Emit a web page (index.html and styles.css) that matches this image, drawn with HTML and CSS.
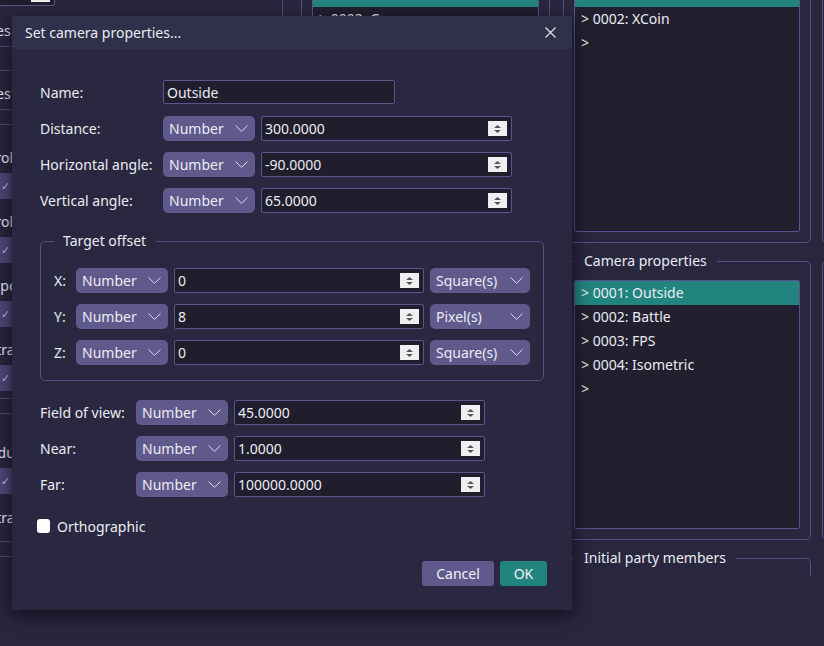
FILE: index.html
```html
<!DOCTYPE html>
<html lang="en">
<head>
    <meta charset="UTF-8">
    <meta name="viewport" content="width=device-width, initial-scale=1.0">
    <title>Set camera properties...</title>
    <link rel="stylesheet" href="styles.css">
</head>
<body>

<div class="viewport">
    <div class="app">
        <div class="col col-left">
            <div class="box box-a">
                <div class="spin mini">
                    <span>1</span>
                    <span class="spinner"><svg width="7" height="8" viewBox="0 0 7 8"><path d="M0 3 L3.5 0 L7 3 Z M0 5 L7 5 L3.5 8 Z" fill="#555"/></svg></span>
                </div>
                <div class="cut first">Tiles (px)</div>
            </div>
            <div class="box box-b">
                <div class="cut">Tiles (px)</div>
            </div>
            <div class="box box-c">
                <div class="field"><div class="cut">Scroll</div><div class="tick">&#10003;</div></div>
                <div class="field"><div class="cut">Scroll</div><div class="tick">&#10003;</div></div>
                <div class="field"><div class="cut">A speed</div><div class="tick">&#10003;</div></div>
                <div class="field"><div class="cut">Extra</div><div class="tick">&#10003;</div></div>
            </div>
            <div class="box box-d">
                <div class="field"><div class="cut">Reduce</div><div class="tick">&#10003;</div></div>
                <div class="cut last">Extra</div>
            </div>
            <div class="box box-e"></div>
        </div>

        <div class="col col-mid">
            <fieldset class="group">
                <legend>Colors</legend>
                <div class="list list-top">
                    <div class="item selected">&gt; 0001: Blue</div>
                    <div class="item">&gt; 0002: Green</div>
                    <div class="item">&gt;</div>
                </div>
            </fieldset>
        </div>

        <div class="col col-right">
            <fieldset class="group">
                <legend>Currencies</legend>
                <div class="list list-top">
                    <div class="item selected">&gt; 0001: Gold</div>
                    <div class="item">&gt; 0002: XCoin</div>
                    <div class="item">&gt;</div>
                </div>
            </fieldset>
            <fieldset class="group">
                <legend>Camera properties</legend>
                <div class="list list-camera">
                    <div class="item selected">&gt; 0001: Outside</div>
                    <div class="item">&gt; 0002: Battle</div>
                    <div class="item">&gt; 0003: FPS</div>
                    <div class="item">&gt; 0004: Isometric</div>
                    <div class="item">&gt;</div>
                </div>
            </fieldset>
            <fieldset class="group">
                <legend>Initial party members</legend>
                <div class="list list-party"></div>
            </fieldset>
        </div>

        <div class="col col-far">
            <fieldset class="group">
                <legend>Musics</legend>
                <div class="list list-top"></div>
            </fieldset>
            <fieldset class="group">
                <legend>Sounds</legend>
                <div class="list list-camera"></div>
            </fieldset>
        </div>
    </div>
</div>

<div class="dialog">
    <div class="dialog-title">
        <span>Set camera properties...</span>
        <svg class="close" width="11" height="11" viewBox="0 0 11 11"><path d="M0.5 0.5 L10.5 10.5 M10.5 0.5 L0.5 10.5" stroke="#e2e2ea" stroke-width="1.2"/></svg>
    </div>

    <div class="dialog-body">
        <div class="form main-form">
            <label>Name:</label>
            <div class="text-input name-input">Outside</div>

            <label>Distance:</label>
            <div class="select">Number <svg width="13" height="7" viewBox="0 0 13 7"><path d="M0.5 0.5 L6.5 6.3 L12.5 0.5" fill="none" stroke="#dddbe9"/></svg></div>
            <div class="spin"><span>300.0000</span><span class="spinner"><svg width="7" height="8" viewBox="0 0 7 8"><path d="M0 3 L3.5 0 L7 3 Z M0 5 L7 5 L3.5 8 Z" fill="#555"/></svg></span></div>

            <label>Horizontal angle:</label>
            <div class="select">Number <svg width="13" height="7" viewBox="0 0 13 7"><path d="M0.5 0.5 L6.5 6.3 L12.5 0.5" fill="none" stroke="#dddbe9"/></svg></div>
            <div class="spin"><span>-90.0000</span><span class="spinner"><svg width="7" height="8" viewBox="0 0 7 8"><path d="M0 3 L3.5 0 L7 3 Z M0 5 L7 5 L3.5 8 Z" fill="#555"/></svg></span></div>

            <label>Vertical angle:</label>
            <div class="select">Number <svg width="13" height="7" viewBox="0 0 13 7"><path d="M0.5 0.5 L6.5 6.3 L12.5 0.5" fill="none" stroke="#dddbe9"/></svg></div>
            <div class="spin"><span>65.0000</span><span class="spinner"><svg width="7" height="8" viewBox="0 0 7 8"><path d="M0 3 L3.5 0 L7 3 Z M0 5 L7 5 L3.5 8 Z" fill="#555"/></svg></span></div>
        </div>

        <fieldset class="offset">
            <legend>Target offset</legend>
            <div class="form offset-form">
                <label>X:</label>
                <div class="select">Number <svg width="13" height="7" viewBox="0 0 13 7"><path d="M0.5 0.5 L6.5 6.3 L12.5 0.5" fill="none" stroke="#dddbe9"/></svg></div>
                <div class="spin"><span>0</span><span class="spinner"><svg width="7" height="8" viewBox="0 0 7 8"><path d="M0 3 L3.5 0 L7 3 Z M0 5 L7 5 L3.5 8 Z" fill="#555"/></svg></span></div>
                <div class="select">Square(s) <svg width="13" height="7" viewBox="0 0 13 7"><path d="M0.5 0.5 L6.5 6.3 L12.5 0.5" fill="none" stroke="#dddbe9"/></svg></div>

                <label>Y:</label>
                <div class="select">Number <svg width="13" height="7" viewBox="0 0 13 7"><path d="M0.5 0.5 L6.5 6.3 L12.5 0.5" fill="none" stroke="#dddbe9"/></svg></div>
                <div class="spin"><span>8</span><span class="spinner"><svg width="7" height="8" viewBox="0 0 7 8"><path d="M0 3 L3.5 0 L7 3 Z M0 5 L7 5 L3.5 8 Z" fill="#555"/></svg></span></div>
                <div class="select">Pixel(s) <svg width="13" height="7" viewBox="0 0 13 7"><path d="M0.5 0.5 L6.5 6.3 L12.5 0.5" fill="none" stroke="#dddbe9"/></svg></div>

                <label>Z:</label>
                <div class="select">Number <svg width="13" height="7" viewBox="0 0 13 7"><path d="M0.5 0.5 L6.5 6.3 L12.5 0.5" fill="none" stroke="#dddbe9"/></svg></div>
                <div class="spin"><span>0</span><span class="spinner"><svg width="7" height="8" viewBox="0 0 7 8"><path d="M0 3 L3.5 0 L7 3 Z M0 5 L7 5 L3.5 8 Z" fill="#555"/></svg></span></div>
                <div class="select">Square(s) <svg width="13" height="7" viewBox="0 0 13 7"><path d="M0.5 0.5 L6.5 6.3 L12.5 0.5" fill="none" stroke="#dddbe9"/></svg></div>
            </div>
        </fieldset>

        <div class="form view-form">
            <label>Field of view:</label>
            <div class="select">Number <svg width="13" height="7" viewBox="0 0 13 7"><path d="M0.5 0.5 L6.5 6.3 L12.5 0.5" fill="none" stroke="#dddbe9"/></svg></div>
            <div class="spin"><span>45.0000</span><span class="spinner"><svg width="7" height="8" viewBox="0 0 7 8"><path d="M0 3 L3.5 0 L7 3 Z M0 5 L7 5 L3.5 8 Z" fill="#555"/></svg></span></div>

            <label>Near:</label>
            <div class="select">Number <svg width="13" height="7" viewBox="0 0 13 7"><path d="M0.5 0.5 L6.5 6.3 L12.5 0.5" fill="none" stroke="#dddbe9"/></svg></div>
            <div class="spin"><span>1.0000</span><span class="spinner"><svg width="7" height="8" viewBox="0 0 7 8"><path d="M0 3 L3.5 0 L7 3 Z M0 5 L7 5 L3.5 8 Z" fill="#555"/></svg></span></div>

            <label>Far:</label>
            <div class="select">Number <svg width="13" height="7" viewBox="0 0 13 7"><path d="M0.5 0.5 L6.5 6.3 L12.5 0.5" fill="none" stroke="#dddbe9"/></svg></div>
            <div class="spin"><span>100000.0000</span><span class="spinner"><svg width="7" height="8" viewBox="0 0 7 8"><path d="M0 3 L3.5 0 L7 3 Z M0 5 L7 5 L3.5 8 Z" fill="#555"/></svg></span></div>
        </div>

        <div class="check-row">
            <span class="checkbox"></span>
            <span>Orthographic</span>
        </div>

        <div class="actions">
            <button class="cancel">Cancel</button>
            <button class="ok">OK</button>
        </div>
    </div>
</div>

</body>
</html>
```

FILE: styles.css
```css
* {
    box-sizing: border-box;
}

html, body {
    margin: 0;
    height: 100%;
}

body {
    position: relative;
    overflow: hidden;
    background-color: #29273e;
    color: #ebebf2;
    font-family: "Noto Sans", "Open Sans", sans-serif;
    font-size: 14px;
}

/* background window, scrolled a little */
.viewport {
    height: 576px;
    overflow: hidden;
}

.app {
    display: flex;
    align-items: flex-start;
    margin-top: -47px;
}

.col {
    display: flex;
    flex-direction: column;
    flex-shrink: 0;
}

.col-left {
    width: 313px;
    margin-left: -30px;
    gap: 14px;
}

.col-mid {
    width: 249px;
    margin-left: 18px;
}

.col-right {
    width: 248px;
    margin-left: 13px;
    gap: 8px;
}

.col-far {
    width: 220px;
    margin-left: 11px;
    gap: 8px;
}

.box {
    border: 1px solid #4f4879;
    border-radius: 5px;
    padding: 0 10px;
}

.box-a {
    padding-top: 28px;
    padding-bottom: 5px;
}

.box-b {
    padding-top: 13px;
    padding-bottom: 5px;
    margin-top: 9px;
}

.box-c {
    display: flex;
    flex-direction: column;
    gap: 13px;
    padding-top: 23px;
    padding-bottom: 7px;
}

.box-d {
    display: flex;
    flex-direction: column;
    padding-top: 29px;
    padding-bottom: 13px;
}

.box-e {
    height: 120px;
}

.cut {
    height: 20px;
    line-height: 20px;
    white-space: nowrap;
}

.cut.first {
    margin-top: 15px;
}

.cut.last {
    margin-top: 14px;
}

.field {
    display: flex;
    flex-direction: column;
    gap: 5px;
}

.tick {
    width: 26px;
    height: 26px;
    margin-left: 11px;
    padding-left: 9px;
    border-radius: 5px;
    background-color: #4e4878;
    color: #c9c5de;
    font-size: 11px;
    line-height: 26px;
}

.group {
    margin: 0;
    min-width: 0;
    padding: 9px 10px 10px;
    border: 1px solid #554d86;
    border-radius: 5px;
}

.group legend {
    padding: 0 10px;
    line-height: 20px;
    white-space: nowrap;
}

.list {
    border: 1px solid #5a5290;
    border-radius: 2px;
    background-color: #221f2f;
}

.list-top {
    height: 250px;
}

.list-camera {
    height: 249px;
}

.list-party {
    height: 160px;
}

.item {
    height: 24px;
    line-height: 24px;
    padding-left: 6px;
    white-space: nowrap;
}

.item.selected {
    background-color: #22847e;
}

/* dialog */
.dialog {
    position: absolute;
    left: 12px;
    top: 16px;
    width: 560px;
    height: 594px;
    display: flex;
    flex-direction: column;
    background-color: #2a2840;
    box-shadow: 0 5px 16px rgba(8, 6, 16, 0.75);
}

.dialog-title {
    height: 33px;
    flex-shrink: 0;
    display: flex;
    align-items: center;
    justify-content: space-between;
    padding: 0 16px 0 13px;
    background-color: #2e3149;
}

.dialog-body {
    display: flex;
    flex-direction: column;
    padding: 31px 28px 0;
}

.form {
    display: grid;
    column-gap: 6px;
    row-gap: 11px;
    align-items: center;
}

.form label {
    white-space: nowrap;
}

.main-form {
    grid-template-columns: 117px 92px 251px;
    grid-auto-rows: 25px;
}

.name-input {
    grid-column: span 2;
    width: 232px;
    height: 24px;
    align-self: start;
}

.offset {
    margin: 18px 0 0;
    min-width: 0;
    padding: 17px 13px 15px;
    border: 1px solid #544c82;
    border-radius: 5px;
}

.offset legend {
    padding: 0 10px 0 9px;
    line-height: 20px;
}

.offset-form {
    grid-template-columns: 16px 92px 250px 100px;
    grid-auto-rows: 25px;
}

.view-form {
    margin-top: 19px;
    grid-template-columns: 90px 92px 251px;
    grid-auto-rows: 25px;
}

.select {
    height: 25px;
    display: flex;
    align-items: center;
    justify-content: space-between;
    padding: 0 7px 0 6px;
    border-radius: 5px;
    background-color: #605a8c;
    white-space: nowrap;
}

.text-input,
.spin {
    display: flex;
    align-items: center;
    padding: 0 4px 0 3px;
    border: 1px solid #5c5491;
    border-radius: 2px;
    background-color: #201e2c;
    white-space: nowrap;
}

.spin {
    height: 25px;
}

.spin.mini {
    width: 74px;
    height: 24px;
    color: transparent;
}

.spinner {
    margin-left: auto;
    width: 19px;
    height: 15px;
    display: flex;
    align-items: center;
    justify-content: center;
    background-color: #efeff1;
}

.check-row {
    display: flex;
    align-items: center;
    gap: 7px;
    height: 20px;
    margin: 19px 0 0 -3px;
}

.checkbox {
    width: 13px;
    height: 14px;
    border-radius: 3px;
    background-color: #ffffff;
}

.actions {
    display: flex;
    justify-content: flex-end;
    gap: 6px;
    margin: 25px -3px 0 0;
}

button {
    height: 25px;
    border: none;
    border-radius: 3px;
    color: #f2f2f6;
    font-family: inherit;
    font-size: 14px;
    cursor: pointer;
}

button.cancel {
    width: 72px;
    background-color: #605a8c;
}

button.ok {
    width: 47px;
    background-color: #22847e;
}
```
